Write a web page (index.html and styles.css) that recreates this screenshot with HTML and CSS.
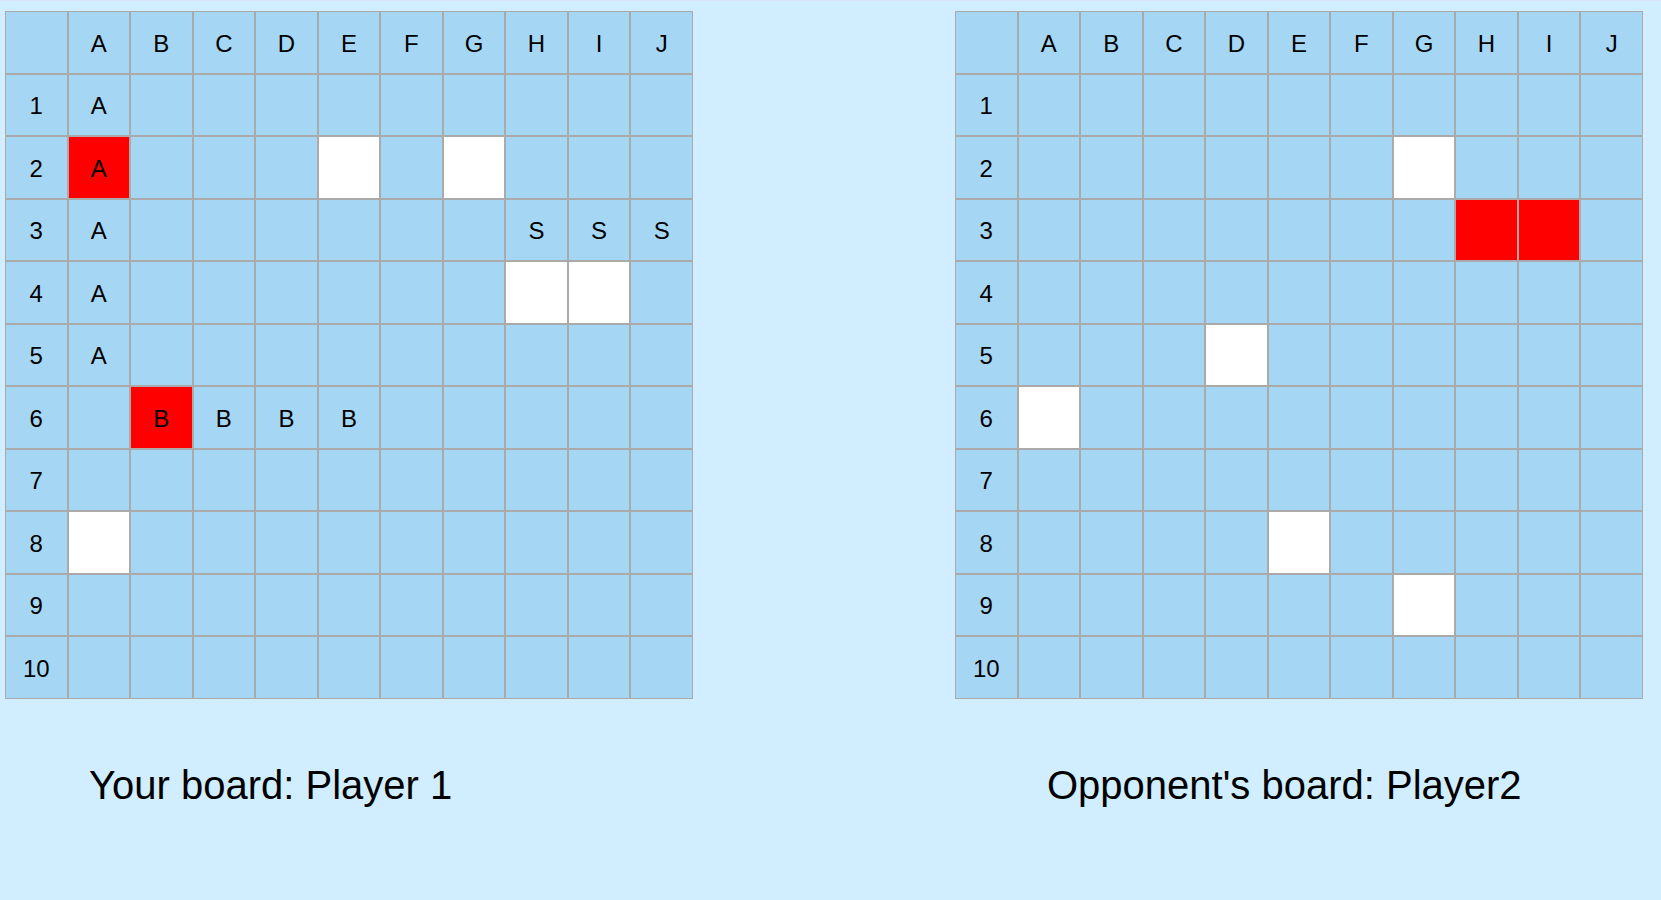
FILE: index.html
```html
<!DOCTYPE html>
<html lang="en">
<head>
    <meta charset="UTF-8">
    <title>Battleship</title>
    <link rel="stylesheet" href="styles.css">
</head>
<body>
    <div class="boards">
        <div class="player">
            <table class="board" id="own"></table>
            <div class="caption own-caption">Your board: Player 1</div>
        </div>
        <div class="player">
            <table class="board" id="enemy"></table>
            <div class="caption enemy-caption">Opponent's board: Player2</div>
        </div>
    </div>

    <script>
        const cols = ['A', 'B', 'C', 'D', 'E', 'F', 'G', 'H', 'I', 'J'];

        // cell state: ship letter, 'miss' (white) or 'hit' (red)
        const own = {
            'A1': 'A', 'A2': 'hit:A', 'E2': 'miss', 'G2': 'miss',
            'A3': 'A', 'H3': 'S', 'I3': 'S', 'J3': 'S',
            'A4': 'A', 'H4': 'miss', 'I4': 'miss',
            'A5': 'A',
            'B6': 'hit:B', 'C6': 'B', 'D6': 'B', 'E6': 'B',
            'A8': 'miss'
        };

        const enemy = {
            'G2': 'miss', 'H3': 'hit', 'I3': 'hit', 'D5': 'miss',
            'A6': 'miss', 'E8': 'miss', 'G9': 'miss'
        };

        function drawBoard(table, cells) {
            let head = '<tr><td></td>';
            cols.forEach(c => head += '<td>' + c + '</td>');
            head += '</tr>';

            let rows = '';
            for (let r = 1; r <= 10; r++) {
                rows += '<tr><td>' + r + '</td>';
                cols.forEach(c => {
                    const v = cells[c + r] || '';
                    if (v === 'miss') {
                        rows += '<td class="miss"></td>';
                    } else if (v.startsWith('hit')) {
                        rows += '<td class="hit">' + (v.split(':')[1] || '') + '</td>';
                    } else {
                        rows += '<td>' + v + '</td>';
                    }
                });
                rows += '</tr>';
            }
            table.innerHTML = head + rows;
        }

        drawBoard(document.getElementById('own'), own);
        drawBoard(document.getElementById('enemy'), enemy);
    </script>
</body>
</html>
```

FILE: styles.css
```css
body {
    margin: 0;
    border-top: 1px solid #d7e6ef;
    background: #d0eeff;
    font-family: "Liberation Sans", Arial, sans-serif;
    color: black;
    min-height: 899px;
}

.boards {
    display: flex;
    gap: 262px;
    padding: 10px 0 0 5px;
}

.board {
    width: 688px;
    table-layout: fixed;
    border-spacing: 0;
    background: #a5d7f5;
}

.board tr {
    height: 62.5px;
}

.board td {
    border: 1px solid #aaa;
    padding: 3px 0 0 0;
    text-align: center;
    vertical-align: middle;
    font-size: 24px;
}

.board td.miss {
    background: white;
}

.board td.hit {
    background: red;
}

.caption {
    font-size: 40px;
    margin-top: 64px;
}

.own-caption {
    padding-left: 84px;
}

.enemy-caption {
    padding-left: 92px;
}
```
